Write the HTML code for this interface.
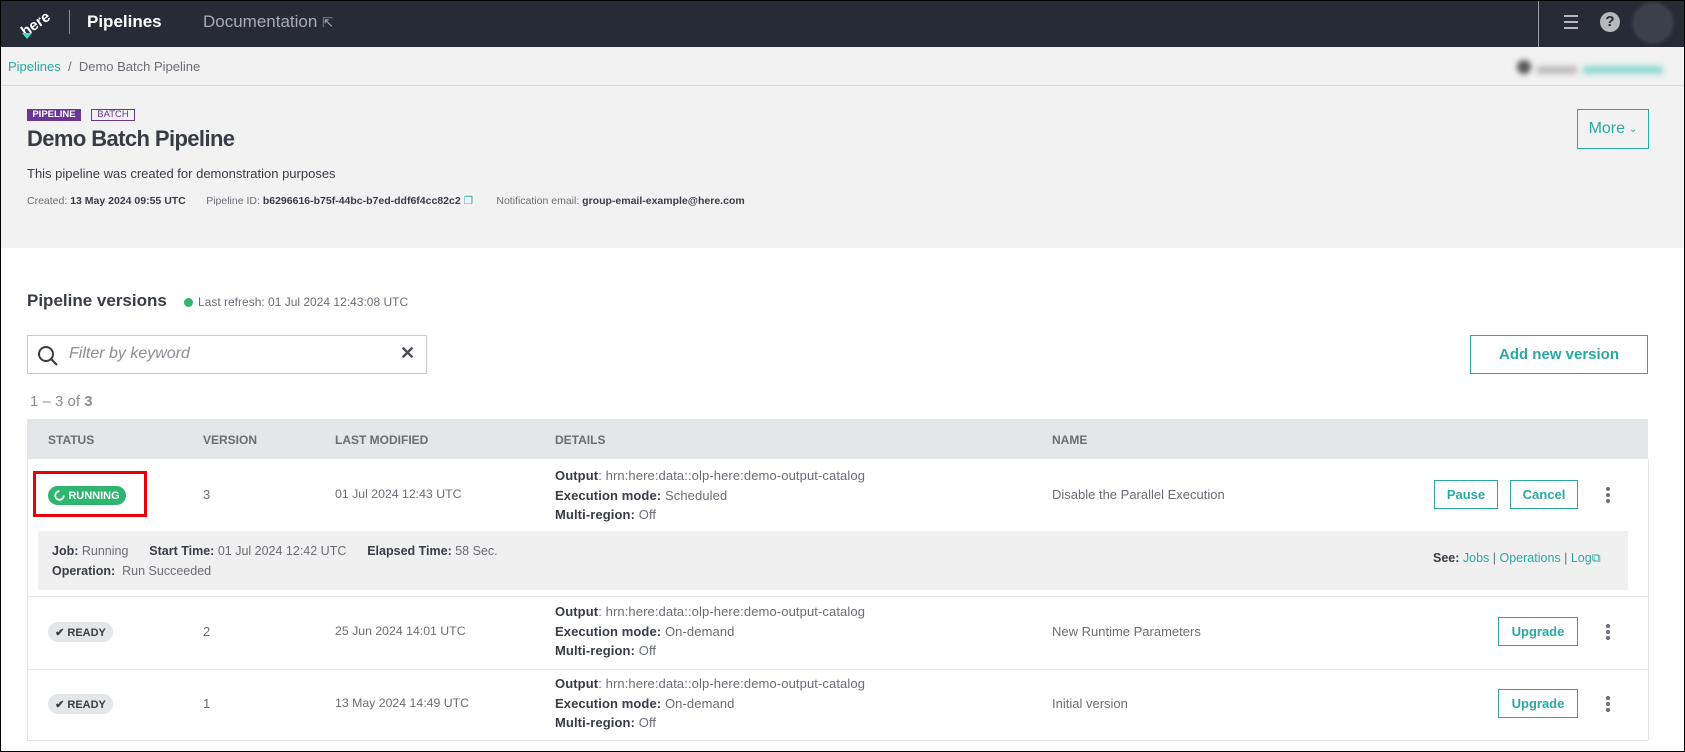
<!DOCTYPE html>
<html><head><meta charset="utf-8"><style>
*{box-sizing:border-box;margin:0;padding:0}
body{width:1685px;height:752px;overflow:hidden;background:#fff;font-family:"Liberation Sans",sans-serif;color:#383c45;position:relative}
.frame{position:absolute;inset:0;border:1px solid #000;pointer-events:none;z-index:10}
.abs{position:absolute;white-space:nowrap}
.nav{position:absolute;left:0;top:0;width:1685px;height:47px;background:#262b36}
.hdr{position:absolute;left:0;top:47px;width:1685px;height:201px;background:#f2f2f2}
.teal{color:#2aa9a3}
.btn{position:absolute;border:1px solid #2aa9a3;color:#2aa9a3;background:#fff;font-weight:bold;font-size:13px;display:flex;align-items:center;justify-content:center}
.th{position:absolute;top:433px;font-size:12px;font-weight:bold;color:#6a6d74}
.t13{font-size:13px;color:#6a6d74}
.dt{font-size:12.3px;color:#6a6d74}
.b{font-weight:bold;color:#383c45}
.sm{font-size:12.5px;color:#6a6d74}
.det{font-size:13px;color:#6a6d74;letter-spacing:0.1px}
.dots{position:absolute;width:4px}
.dots i{display:block;width:4px;height:4px;border-radius:2px;background:#6a6d74;margin-bottom:2px}
.ready{position:absolute;left:48px;width:65px;height:20px;border-radius:10px;background:#e4e6ea;font-size:11px;font-weight:bold;color:#383c45;display:flex;align-items:center;justify-content:center}
</style></head><body>
<div class="nav">
  <div class="abs" style="left:20px;top:10px;width:34px;height:28px;color:#fff;font-weight:bold;font-size:15px;transform:rotate(-35deg);transform-origin:center;line-height:28px">here</div>
  <div class="abs" style="left:22px;top:33px;width:0;height:0;border-left:5px solid transparent;border-right:5px solid transparent;border-top:6px solid #48dad0"></div>
  <div class="abs" style="left:69px;top:10px;width:1px;height:24px;background:#8a8e96"></div>
  <div class="abs" style="left:87px;top:12px;font-size:17px;font-weight:bold;color:#fff">Pipelines</div>
  <div class="abs" style="left:203px;top:12px;font-size:17px;color:#a8abb1">Documentation <span style="font-size:13px">⇱</span></div>
  <div class="abs" style="left:1538px;top:0;width:1px;height:47px;background:#9a9ea5"></div>
  <div class="abs" style="left:1564px;top:15px;width:14px;height:2px;background:#b5b8bd;box-shadow:0 6px 0 #b5b8bd,0 12px 0 #b5b8bd"></div>
  <div class="abs" style="left:1600px;top:12px;width:20px;height:20px;border-radius:10px;background:#b5b8bd;color:#262b36;font-weight:bold;font-size:15px;text-align:center;line-height:20px">?</div>
  <div class="abs" style="left:1634px;top:4px;width:38px;height:38px;border-radius:19px;background:#3b404a;box-shadow:0 0 6px #555"></div>
</div>
<div class="hdr">
  <div class="abs" style="left:8px;top:12px;font-size:13px"><span class="teal">Pipelines</span> <span style="color:#6a6d74">&nbsp;/&nbsp; Demo Batch Pipeline</span></div>
  <div class="abs" style="left:1517px;top:13px;width:155px;height:16px;filter:blur(3px)"><span style="display:inline-block;width:14px;height:14px;border-radius:7px;background:#555"></span><span style="display:inline-block;width:40px;height:8px;background:#bbb;margin-left:6px"></span><span style="display:inline-block;width:80px;height:8px;background:#8fd8d3;margin-left:6px"></span></div>
  <div class="abs" style="left:0;top:38px;width:1685px;height:1px;background:#d9d9d9"></div>
  <div class="abs" style="left:27px;top:62px;width:54px;height:12px;background:#6b3596;color:#fff;font-size:9.5px;font-weight:bold;line-height:12px;text-align:center">PIPELINE</div>
  <div class="abs" style="left:91px;top:62px;width:44px;height:12px;border:1px solid #6b3596;color:#6b3596;font-size:9.5px;line-height:10px;text-align:center">BATCH</div>
  <div class="abs" style="left:27px;top:79px;font-size:22px;font-weight:bold;color:#383c45;letter-spacing:-0.6px">Demo Batch Pipeline</div>
  <div class="abs" style="left:27px;top:119px;font-size:13px;color:#383c45">This pipeline was created for demonstration purposes</div>
  <div class="abs" style="left:27px;top:148px;font-size:10.5px;color:#6a6d74">Created: <b style="color:#383c45">13 May 2024 09:55 UTC</b> &nbsp; &nbsp; &nbsp; Pipeline ID: <b style="color:#383c45">b6296616-b75f-44bc-b7ed-ddf6f4cc82c2</b> <span class="teal">❐</span> &nbsp; &nbsp; &nbsp; &nbsp;Notification email: <b style="color:#383c45">group-email-example@here.com</b></div>
  <div class="btn" style="left:1577px;top:62px;width:72px;height:40px;font-weight:normal;font-size:16px;background:transparent">More <span style="font-size:10px;margin-left:4px">⌄</span></div>
</div>
<div class="abs" style="left:27px;top:291px;font-size:17px;font-weight:bold;color:#383c45">Pipeline versions</div>
<div class="abs" style="left:184px;top:298px;width:9px;height:9px;border-radius:5px;background:#2fb56e"></div>
<div class="abs" style="left:198px;top:295px;font-size:12px;color:#6a6d74">Last refresh: 01 Jul 2024 12:43:08 UTC</div>
<div class="abs" style="left:27px;top:335px;width:400px;height:39px;border:1px solid #c8cacd;background:#fff">
  <svg class="abs" style="left:9px;top:9px" width="22" height="22" viewBox="0 0 22 22"><circle cx="9" cy="9" r="7" fill="none" stroke="#383c45" stroke-width="2"/><path d="M14 14l6 6" stroke="#383c45" stroke-width="2.2"/></svg>
  <div class="abs" style="left:41px;top:9px;font-size:16px;font-style:italic;color:#8a8d93">Filter by keyword</div>
  <div class="abs" style="left:372px;top:7px;font-size:18px;font-weight:bold;color:#4a4e56">✕</div>
</div>
<div class="btn" style="left:1470px;top:335px;width:178px;height:39px;font-size:15px">Add new version</div>
<div class="abs" style="left:30px;top:393px;font-size:15px;color:#8a8d93">1 – 3 of <b>3</b></div>

<div class="abs" style="left:27px;top:419px;width:1621px;height:40px;background:#e4e6ea"></div>
<div class="th" style="left:48px">STATUS</div>
<div class="th" style="left:203px">VERSION</div>
<div class="th" style="left:335px">LAST MODIFIED</div>
<div class="th" style="left:555px">DETAILS</div>
<div class="th" style="left:1052px">NAME</div>
<div class="abs" style="left:27px;top:459px;width:1px;height:281px;background:#e4e6ea"></div>
<div class="abs" style="left:1648px;top:459px;width:1px;height:281px;background:#e4e6ea"></div>

<!-- row 1 -->
<div class="abs" style="left:33px;top:471px;width:114px;height:46px;border:3px solid #e8000b"></div>
<div class="abs" style="left:48px;top:486px;width:78px;height:19px;border-radius:10px;background:#2fb56e;color:#fff;font-size:11px;font-weight:bold;display:flex;align-items:center;justify-content:center"><svg width="11" height="11" viewBox="0 0 11 11" style="margin-right:3px"><path d="M5.5 1.2A4.3 4.3 0 1 0 9.8 5.5" fill="none" stroke="#fff" stroke-width="1.8"/></svg>RUNNING</div>
<div class="abs t13" style="left:203px;top:487px">3</div>
<div class="abs dt" style="left:335px;top:487px">01 Jul 2024 12:43 UTC</div>
<div class="abs det" style="left:555px;top:466px;line-height:19.5px"><span class="b">Output</span>: hrn:here:data::olp-here:demo-output-catalog<br><span class="b">Execution mode:</span> Scheduled<br><span class="b">Multi-region:</span> Off</div>
<div class="abs t13" style="left:1052px;top:487px">Disable the Parallel Execution</div>
<div class="btn" style="left:1434px;top:480px;width:64px;height:29px">Pause</div>
<div class="btn" style="left:1510px;top:480px;width:68px;height:29px">Cancel</div>
<div class="dots" style="left:1606px;top:487px"><i></i><i></i><i></i></div>
<div class="abs" style="left:38px;top:531px;width:1590px;height:59px;background:#f0f0f0;border-radius:2px"></div>
<div class="abs sm" style="left:52px;top:541px;line-height:20px"><span class="b">Job:</span> Running &nbsp; &nbsp; &nbsp;<span class="b">Start Time:</span> 01 Jul 2024 12:42 UTC &nbsp; &nbsp; &nbsp;<span class="b">Elapsed Time:</span> 58 Sec.<br><span class="b">Operation:</span>&nbsp; Run Succeeded</div>
<div class="abs sm" style="left:1433px;top:551px"><span class="b">See:</span> <span class="teal">Jobs</span> | <span class="teal">Operations</span> | <span class="teal">Log⧉</span></div>
<div class="abs" style="left:27px;top:596px;width:1621px;height:1px;background:#e4e6ea"></div>

<!-- row 2 -->
<div class="ready" style="top:622px">✔ READY</div>
<div class="abs t13" style="left:203px;top:624px">2</div>
<div class="abs dt" style="left:335px;top:624px">25 Jun 2024 14:01 UTC</div>
<div class="abs det" style="left:555px;top:602px;line-height:19.5px"><span class="b">Output</span>: hrn:here:data::olp-here:demo-output-catalog<br><span class="b">Execution mode:</span> On-demand<br><span class="b">Multi-region:</span> Off</div>
<div class="abs t13" style="left:1052px;top:624px">New Runtime Parameters</div>
<div class="btn" style="left:1498px;top:617px;width:80px;height:29px">Upgrade</div>
<div class="dots" style="left:1606px;top:624px"><i></i><i></i><i></i></div>
<div class="abs" style="left:27px;top:669px;width:1621px;height:1px;background:#e4e6ea"></div>

<!-- row 3 -->
<div class="ready" style="top:694px">✔ READY</div>
<div class="abs t13" style="left:203px;top:696px">1</div>
<div class="abs dt" style="left:335px;top:696px">13 May 2024 14:49 UTC</div>
<div class="abs det" style="left:555px;top:674px;line-height:19.5px"><span class="b">Output</span>: hrn:here:data::olp-here:demo-output-catalog<br><span class="b">Execution mode:</span> On-demand<br><span class="b">Multi-region:</span> Off</div>
<div class="abs t13" style="left:1052px;top:696px">Initial version</div>
<div class="btn" style="left:1498px;top:689px;width:80px;height:29px">Upgrade</div>
<div class="dots" style="left:1606px;top:696px"><i></i><i></i><i></i></div>
<div class="abs" style="left:27px;top:740px;width:1621px;height:1px;background:#e4e6ea"></div>
<div class="frame"></div>
</body></html>
